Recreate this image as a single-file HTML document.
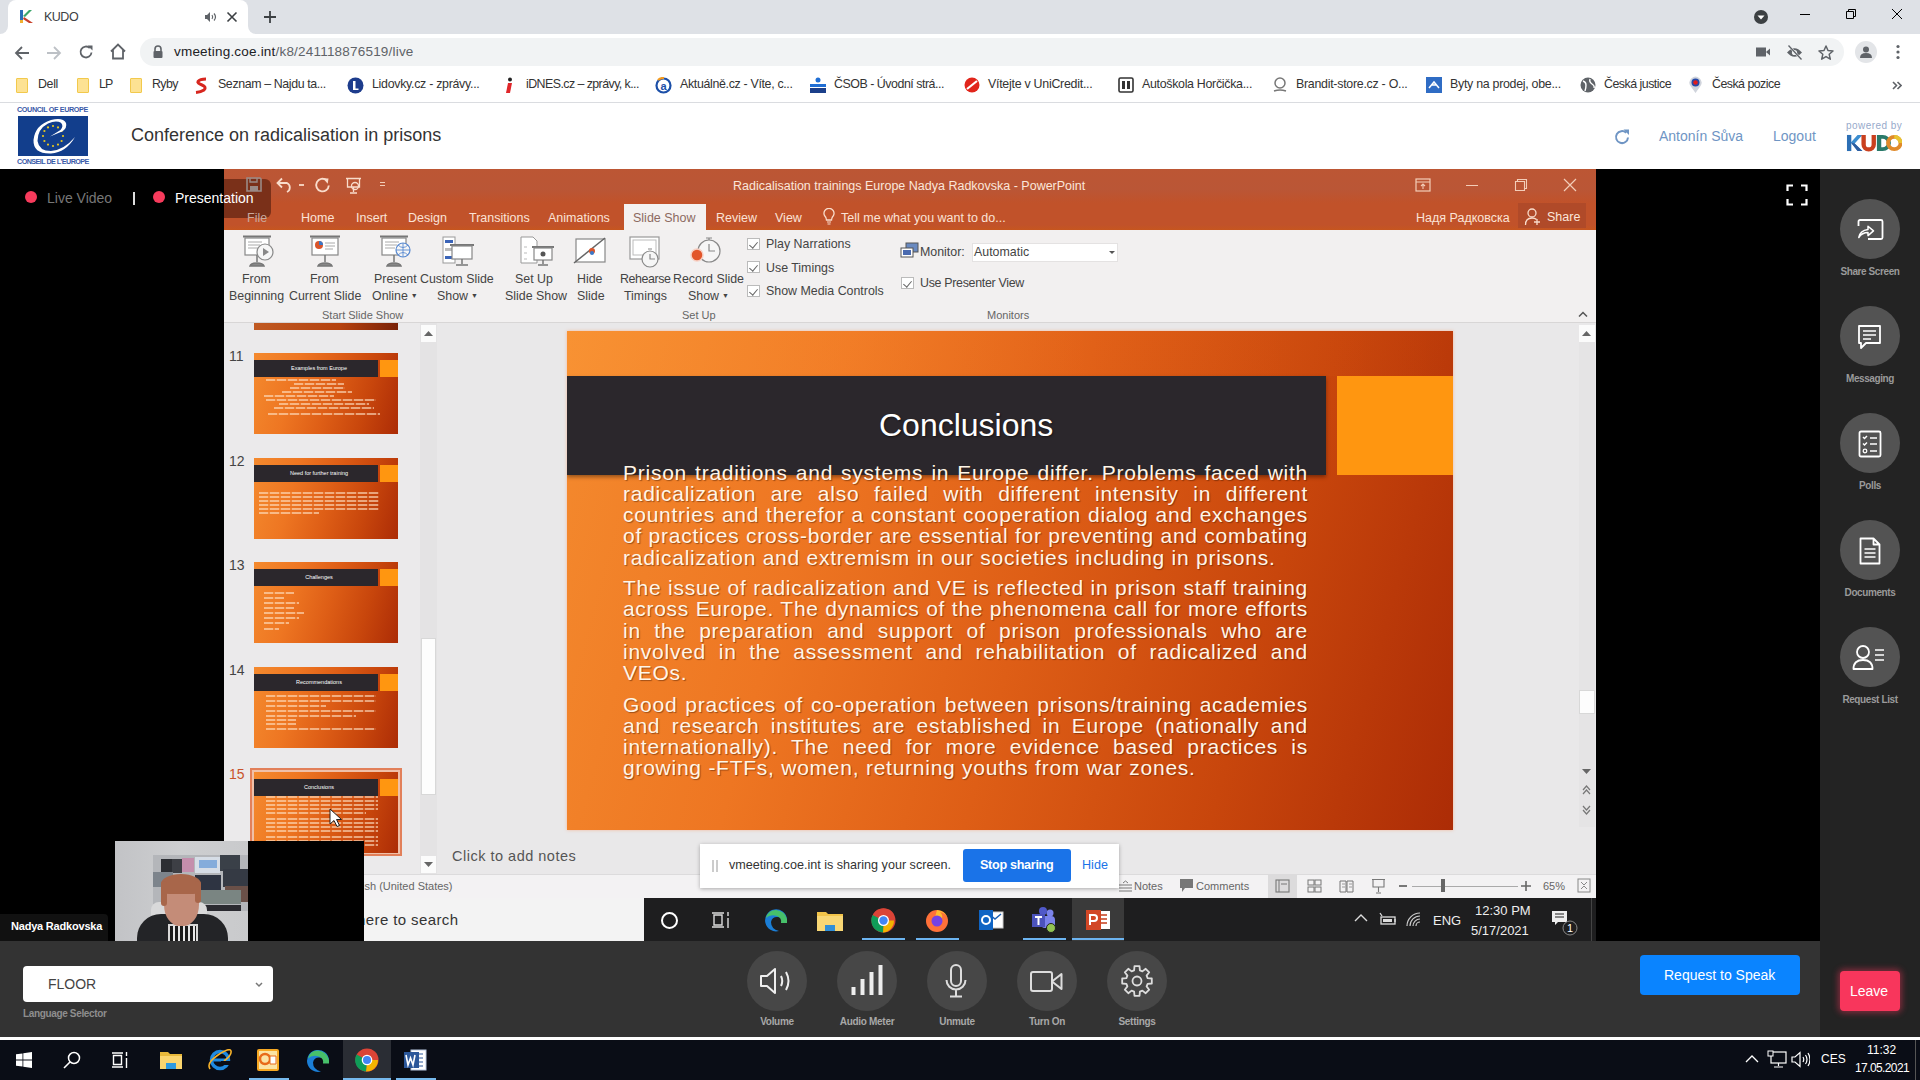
<!DOCTYPE html>
<html><head><meta charset="utf-8">
<style>
*{margin:0;padding:0;box-sizing:border-box}
html,body{width:1920px;height:1080px;overflow:hidden;background:#000;font-family:"Liberation Sans",sans-serif}
body{position:relative}
.a{position:absolute}
#bmk span{position:absolute;top:9px;white-space:nowrap;letter-spacing:-0.25px}
.fold{position:absolute;top:10px;width:12px;height:15px;background:#fde293;border:1px solid #f2c94c;border-radius:1px}
#ptabs span{position:absolute;top:211px;white-space:nowrap}
#rlab span{position:absolute;white-space:nowrap}
.cb{position:absolute;width:13px;height:12px;background:#fff;border:1px solid #bbb}
.cb::after{content:"";position:absolute;left:3px;top:1px;width:4px;height:7px;border-right:1.5px solid #666;border-bottom:1.5px solid #666;transform:rotate(40deg)}
.thumb{position:absolute;left:254px;width:144px;height:81px;overflow:hidden;background:linear-gradient(105deg,#f48a2e 0%,#ee7622 28%,#de5e16 52%,#c8460c 76%,#ac2c06 100%)}
.thumb .tb{position:absolute;left:0;top:7px;width:124px;height:17px;background:#2b272c}
.thumb .tsq{position:absolute;left:126px;top:7px;width:18px;height:17px;background:#ff9610}
.thumb .ttl{position:absolute;left:3px;top:11px;width:124px;text-align:center;height:8px;font-size:5.5px;line-height:8px;color:#fff;white-space:nowrap}
.thumb .tl{position:absolute;height:1.5px;background:repeating-linear-gradient(90deg,rgba(255,228,200,0.6) 0 9px,rgba(255,228,200,0.15) 9px 11px)}
.sbc{position:absolute;left:1840px;width:60px;height:60px;border-radius:50%;background:#535353}
.sbl{position:absolute;margin-top:2px;left:1820px;width:100px;text-align:center;font-size:10px;font-weight:bold;color:#9a9a9a;letter-spacing:-0.4px;white-space:nowrap}
.bbc{position:absolute;top:951px;margin-left:1px;width:60px;height:60px;border-radius:50%;background:#474747}
.bbl{position:absolute;top:1016px;margin-left:1px;width:120px;text-align:center;font-size:10px;font-weight:bold;color:#a8a8a8;letter-spacing:-0.3px;white-space:nowrap}
#body .bl{position:absolute;left:56px;width:685px;height:21.3px;font-size:21px;line-height:21.3px;color:#fff6e8;letter-spacing:0.75px;white-space:nowrap;text-align:justify;text-align-last:justify;text-shadow:1px 1px 1px rgba(60,20,0,0.45)}
#body .bl.last{text-align:left;text-align-last:left}
</style></head><body>
<!-- MAIN BLACK -->
<div class="a" style="left:0;top:169px;width:1820px;height:772px;background:#000"></div>
<div class="a" style="left:1820px;top:169px;width:100px;height:868px;background:#232323"></div>
<div class="a" style="left:0;top:941px;width:1820px;height:96px;background:#333"></div>
<div class="a" style="left:0;top:1037px;width:1920px;height:3px;background:#fff"></div>
<div class="a" style="left:0;top:1040px;width:1920px;height:40px;background:#0a0d16"></div>
<!-- CHROME TAB STRIP -->
<div class="a" style="left:0;top:0;width:1920px;height:34px;background:#dee1e6"></div>
<div class="a" style="left:8px;top:0;width:240px;height:34px;background:#fff;border-radius:8px 8px 0 0"></div>
<div class="a" style="left:0;top:26px;width:256px;height:8px;background:#fff"></div><div class="a" style="left:0;top:18px;width:8px;height:16px;background:#dee1e6;border-radius:0 0 8px 0"></div><div class="a" style="left:248px;top:18px;width:8px;height:16px;background:#dee1e6;border-radius:0 0 0 8px"></div>
<svg class="a" style="left:19px;top:9px" width="16" height="16" viewBox="0 0 16 16">
 <path d="M1 1h3v13H1z" fill="#2a6fb8"/><path d="M4 7l6-6h3L6 8z" fill="#3aa66b"/><path d="M5 8l9 6h-4L4 10z" fill="#c8402a"/><path d="M1 11h3v3H1z" fill="#f0b030"/>
</svg>
<div class="a" style="left:44px;top:10px;font-size:12.5px;color:#3c4043;letter-spacing:-0.5px">KUDO</div>
<svg class="a" style="left:204px;top:11px" width="14" height="12" viewBox="0 0 14 12"><path d="M1 4h2l3-3v10L3 8H1z" fill="#5f6368"/><path d="M8 4q1.5 2 0 4M10 2.5q3 3.5 0 7" stroke="#5f6368" stroke-width="1.2" fill="none"/></svg>
<svg class="a" style="left:226px;top:11px" width="12" height="12" viewBox="0 0 12 12"><path d="M1.5 1.5l9 9M10.5 1.5l-9 9" stroke="#3c4043" stroke-width="1.6"/></svg>
<svg class="a" style="left:263px;top:10px" width="14" height="14" viewBox="0 0 14 14"><path d="M7 1v12M1 7h12" stroke="#3c4043" stroke-width="1.8"/></svg>
<svg class="a" style="left:1753px;top:9px" width="16" height="16" viewBox="0 0 16 16"><circle cx="8" cy="8" r="7" fill="#3c4043"/><path d="M4.5 6.5h7L8 10.5z" fill="#fff"/></svg>
<div class="a" style="left:1800px;top:14px;width:10px;height:1px;background:#000"></div>
<svg class="a" style="left:1845px;top:8px" width="12" height="12" viewBox="0 0 12 12"><path d="M1.5 3.5h7v7h-7z M3.5 3.5v-2h7v7h-2" stroke="#000" stroke-width="1" fill="none"/></svg>
<svg class="a" style="left:1891px;top:8px" width="12" height="12" viewBox="0 0 12 12"><path d="M1 1l10 10M11 1L1 11" stroke="#000" stroke-width="1"/></svg>
<!-- ADDRESS ROW -->
<div class="a" style="left:0;top:34px;width:1920px;height:34px;background:#fff"></div>
<svg class="a" style="left:14px;top:45px" width="16" height="16" viewBox="0 0 16 16"><path d="M15 8H2M8 2L2 8l6 6" stroke="#5f6368" stroke-width="1.8" fill="none"/></svg>
<svg class="a" style="left:46px;top:45px" width="16" height="16" viewBox="0 0 16 16"><path d="M1 8h13M8 2l6 6-6 6" stroke="#bdc1c6" stroke-width="1.8" fill="none"/></svg>
<svg class="a" style="left:78px;top:44px" width="16" height="16" viewBox="0 0 16 16"><path d="M13.5 8.5A5.5 5.5 0 1 1 11.8 4" stroke="#5f6368" stroke-width="1.8" fill="none"/><path d="M9.5 1.5h5v5z" fill="#5f6368"/></svg>
<svg class="a" style="left:109px;top:43px" width="18" height="17" viewBox="0 0 18 17"><path d="M2 8.5L9 1.5l7 7M4 7v8.5h10V7" stroke="#5f6368" stroke-width="1.8" fill="none"/></svg>
<div class="a" style="left:140px;top:38px;width:1704px;height:28px;background:#f1f3f4;border-radius:14px"></div>
<svg class="a" style="left:152px;top:45px" width="12" height="13" viewBox="0 0 12 13"><path d="M3 6V4a3 3 0 0 1 6 0v2" stroke="#5f6368" stroke-width="1.6" fill="none"/><rect x="1.5" y="6" width="9" height="7" rx="1" fill="#5f6368"/></svg>
<div class="a" style="left:174px;top:44px;font-size:13.5px;letter-spacing:0.2px;color:#202124;white-space:nowrap">vmeeting.coe.int<span style="color:#5f6368">/k8/241118876519/live</span></div>
<svg class="a" style="left:1755px;top:46px" width="16" height="12" viewBox="0 0 16 12"><rect x="1" y="1.5" width="10" height="9" fill="#5f6368"/><path d="M11 6l4-3.5v7z" fill="#5f6368"/></svg>
<svg class="a" style="left:1786px;top:45px" width="17" height="15" viewBox="0 0 17 15"><path d="M1 7.5Q8.5 -1 16 7.5Q8.5 16 1 7.5z" fill="#5f6368"/><circle cx="8.5" cy="7.5" r="2.6" fill="#f1f3f4"/><path d="M2.5 0.5l13 14" stroke="#f1f3f4" stroke-width="2.2"/><path d="M2.5 0.5l13 14" stroke="#5f6368" stroke-width="1.3"/></svg>
<svg class="a" style="left:1818px;top:45px" width="16" height="15" viewBox="0 0 16 15"><path d="M8 1l2 4.5 5 .5-3.8 3.3 1.1 4.9L8 11.6l-4.3 2.6 1.1-4.9L1 6l5-.5z" stroke="#5f6368" stroke-width="1.5" fill="none" stroke-linejoin="round"/></svg>
<div class="a" style="left:1855px;top:41px;width:22px;height:22px;border-radius:50%;background:#e3e5e8"></div>
<svg class="a" style="left:1859px;top:45px" width="14" height="14" viewBox="0 0 14 14"><circle cx="7" cy="4.5" r="3" fill="#5f6368"/><path d="M1 13q0-5 6-5t6 5z" fill="#5f6368"/></svg>
<svg class="a" style="left:1895px;top:44px" width="6" height="16" viewBox="0 0 6 16"><circle cx="3" cy="2.5" r="1.6" fill="#5f6368"/><circle cx="3" cy="8" r="1.6" fill="#5f6368"/><circle cx="3" cy="13.5" r="1.6" fill="#5f6368"/></svg>
<!-- BOOKMARKS -->
<div class="a" style="left:0;top:68px;width:1920px;height:35px;background:#fff;border-bottom:1px solid #dadce0"></div>
<div id="bmk" class="a" style="left:0;top:68px;width:1920px;height:34px;font-size:12.4px;color:#333">
 <div class="fold" style="left:16px"></div><span style="left:38px;letter-spacing:-0.34px">Dell</span>
 <div class="fold" style="left:77px"></div><span style="left:99px;letter-spacing:-0.8px">LP</span>
 <div class="fold" style="left:130px"></div><span style="left:152px;letter-spacing:-0.6px">Ryby</span>
 <svg class="a" style="left:194px;top:9px" width="16" height="17" viewBox="0 0 16 17"><path d="M12 2Q6 2 4 4.5Q3 6 8 8Q13 10 10 13Q7 15 2 15.5" stroke="#d7261e" stroke-width="3" fill="none"/></svg>
 <span style="left:218px;letter-spacing:-0.39px">Seznam – Najdu ta...</span>
 <svg class="a" style="left:347px;top:9px" width="17" height="17" viewBox="0 0 17 17"><circle cx="8.5" cy="8.5" r="8" fill="#1d3c8c"/><path d="M6 4h2.5v7.5h3v1.5H6z" fill="#fff"/></svg>
 <span style="left:372px;letter-spacing:-0.29px">Lidovky.cz - zprávy...</span>
 <svg class="a" style="left:504px;top:9px" width="10" height="17" viewBox="0 0 10 17"><circle cx="6" cy="2.5" r="2" fill="#222"/><path d="M4 6h4l-2 10H2z" fill="#e0262a"/></svg>
 <span style="left:526px;letter-spacing:-0.56px">iDNES.cz – zprávy, k...</span>
 <svg class="a" style="left:655px;top:9px" width="17" height="17" viewBox="0 0 17 17"><circle cx="8.5" cy="8.5" r="7" fill="none" stroke="#1b4fa8" stroke-width="2.2"/><path d="M3 3a8 8 0 0 1 6-2" stroke="#f39a1e" stroke-width="2.2" fill="none"/><text x="8.5" y="12.5" font-size="11" font-weight="bold" text-anchor="middle" fill="#1b4fa8" font-family="Liberation Sans">a</text></svg>
 <span style="left:680px;letter-spacing:-0.33px">Aktuálně.cz - Víte, c...</span>
 <svg class="a" style="left:809px;top:9px" width="18" height="17" viewBox="0 0 18 17"><circle cx="9" cy="3" r="2.5" fill="#1f6ed4"/><path d="M1 7h16v3H1z" fill="#1f6ed4"/><path d="M1 11h16v5H1z" fill="#1b3f8a"/></svg>
 <span style="left:834px;letter-spacing:-0.47px">ČSOB - Úvodní strá...</span>
 <svg class="a" style="left:964px;top:9px" width="16" height="16" viewBox="0 0 16 16"><circle cx="8" cy="8" r="7.5" fill="#e1251b"/><path d="M3 12L13 4" stroke="#fff" stroke-width="2.2"/></svg>
 <span style="left:988px;letter-spacing:-0.26px">Vítejte v UniCredit...</span>
 <svg class="a" style="left:1118px;top:9px" width="16" height="16" viewBox="0 0 16 16"><rect x="1" y="1" width="14" height="14" rx="1.5" fill="none" stroke="#333" stroke-width="1.6"/><path d="M4 4h3v8H4zM9 4h3v8H9z" fill="#333"/></svg>
 <span style="left:1142px;letter-spacing:-0.3px">Autoškola Horčička...</span>
 <svg class="a" style="left:1272px;top:9px" width="16" height="17" viewBox="0 0 16 17"><circle cx="8" cy="6" r="5" fill="none" stroke="#777" stroke-width="1.5"/><path d="M2 14q6-2 12 0" stroke="#777" stroke-width="1.5" fill="none"/></svg>
 <span style="left:1296px;letter-spacing:-0.27px">Brandit-store.cz - O...</span>
 <svg class="a" style="left:1426px;top:9px" width="16" height="16" viewBox="0 0 16 16"><rect width="16" height="16" fill="#2f6cc4"/><path d="M3 11l5-6 5 6M6 8h4" stroke="#fff" stroke-width="1.5" fill="none"/></svg>
 <span style="left:1450px;letter-spacing:-0.28px">Byty na prodej, obe...</span>
 <svg class="a" style="left:1580px;top:9px" width="16" height="16" viewBox="0 0 16 16"><circle cx="8" cy="8" r="7.5" fill="#5f6368"/><path d="M3 4q3 1 3 4t-1 6M10 2q-1 3 2 5t2 4" stroke="#fff" stroke-width="1.4" fill="none"/></svg>
 <span style="left:1604px;letter-spacing:-0.51px">Česká justice</span>
 <svg class="a" style="left:1688px;top:8px" width="15" height="18" viewBox="0 0 15 18"><path d="M7.5 17L2.5 10A6 6 0 1 1 12.5 10z" fill="#d0d4dc"/><circle cx="7.5" cy="6.5" r="4" fill="#2549a8"/><circle cx="7.5" cy="6.5" r="2.3" fill="#e21b1b"/></svg>
 <span style="left:1712px;letter-spacing:-0.53px">Česká pozice</span>
 <svg class="a" style="left:1892px;top:13px" width="10" height="9" viewBox="0 0 10 9"><path d="M1 1l3.5 3.5L1 8M5.5 1L9 4.5 5.5 8" stroke="#5f6368" stroke-width="1.6" fill="none"/></svg>
</div>
<!-- KUDO HEADER -->
<div class="a" style="left:0;top:103px;width:1920px;height:66px;background:#fff"></div>
<div class="a" style="left:17px;top:106px;width:72px;font-size:7.2px;font-weight:bold;line-height:8px;color:#3a5aa8;letter-spacing:-0.35px;white-space:nowrap">COUNCIL OF EUROPE</div>
<div class="a" style="left:18px;top:116px;width:70px;height:40px;background:#123e8c"></div>
<svg class="a" style="left:18px;top:116px" width="70" height="40" viewBox="0 0 70 40">
 <g fill="#e8c81e"><circle cx="35" cy="10" r="1.1"/><circle cx="40" cy="11.4" r="1.1"/><circle cx="43.6" cy="15" r="1.1"/><circle cx="45" cy="20" r="1.1"/><circle cx="43.6" cy="25" r="1.1"/><circle cx="40" cy="28.6" r="1.1"/><circle cx="35" cy="30" r="1.1"/><circle cx="30" cy="28.6" r="1.1"/><circle cx="26.4" cy="25" r="1.1"/><circle cx="25" cy="20" r="1.1"/><circle cx="26.4" cy="15" r="1.1"/><circle cx="30" cy="11.4" r="1.1"/></g>
 <path d="M57 21Q48 36.5 33 37.5Q15 38 15.5 24Q17 9 33 4Q45 1 48 7Q49.5 12 44 15.5L32 20.5L42.5 14Q46 10 43 6.8Q38 4 30 7.5Q19.5 13 19.5 25Q21 35 33 35Q46 34 57 21z" fill="#fff"/>
</svg>
<div class="a" style="left:17px;top:158px;width:72px;font-size:7.2px;font-weight:bold;line-height:8px;color:#3a5aa8;letter-spacing:-0.55px;white-space:nowrap">CONSEIL DE L'EUROPE</div>
<div class="a" style="left:131px;top:125px;font-size:18px;color:#333;white-space:nowrap">Conference on radicalisation in prisons</div>
<svg class="a" style="left:1613px;top:128px" width="18" height="18" viewBox="0 0 18 18"><path d="M15 9.5A6 6 0 1 1 13.2 4.8" stroke="#6f95c4" stroke-width="2" fill="none"/><path d="M10.5 1.5h5.5v5.5z" fill="#6f95c4"/></svg>
<div class="a" style="left:1659px;top:128px;font-size:14px;color:#6f95c4;white-space:nowrap">Antonín Sůva</div>
<div class="a" style="left:1773px;top:128px;font-size:14px;color:#6f95c4;white-space:nowrap">Logout</div>
<div class="a" style="left:1846px;top:120px;font-size:10px;color:#97aacb;white-space:nowrap;letter-spacing:0.45px">powered by</div>
<svg class="a" style="left:1846px;top:134px" width="56" height="18" viewBox="0 0 58 19" preserveAspectRatio="none">
 <path d="M1 1h4.5v17H1z" fill="#2c6fb5"/><path d="M5 9l7-8h5L9 10l8 8h-5z" fill="#3c8ed0"/><path d="M5 9l4 1 8 8h-5z" fill="#2d5da0"/>
 <path d="M16 1h4.5v10a3 3 0 0 0 6 0V1H31v10a7.5 7.5 0 0 1-15 0z" fill="#c9401f"/>
 <path d="M32 1h6a8.5 8.5 0 0 1 0 17h-6z M36.5 5v9h1.5a4.5 4.5 0 0 0 0-9z" fill="#2a7a6a" fill-rule="evenodd"/>
 <circle cx="50" cy="9.5" r="6.5" fill="none" stroke="#e08a2a" stroke-width="4"/><path d="M50 3a6.5 6.5 0 0 1 6.5 6.5" stroke="#e8c430" stroke-width="4" fill="none"/>
</svg>
<!-- POWERPOINT WINDOW -->
<div class="a" style="left:224px;top:169px;width:1372px;height:61px;background:linear-gradient(180deg,#bc5634 0px,#ba5636 20px,#c1522a 34px,#c1522a 56px,#c6561f 61px)"></div>
<div class="a" style="left:224px;top:179px;width:47px;height:39px;background:#7a3019;border-radius:0 6px 6px 0"></div>
<svg class="a" style="left:246px;top:177px" width="16" height="15" viewBox="0 0 16 15"><path d="M1 1h13l1 1v12H1z" fill="none" stroke="#9a8a86" stroke-width="1.6"/><path d="M4 1v4h7V1" fill="none" stroke="#9a8a86" stroke-width="1.4"/><rect x="4" y="9" width="8" height="5" fill="#9a8a86"/></svg>
<svg class="a" style="left:276px;top:177px" width="18" height="16" viewBox="0 0 18 16"><path d="M2 6h9a5 5 0 0 1 0 9" fill="none" stroke="#f9dccb" stroke-width="1.8"/><path d="M6 1.5L1.5 6 6 10.5" fill="none" stroke="#f9dccb" stroke-width="1.8"/></svg>
<div class="a" style="left:299px;top:184px;width:5px;height:2px;background:#f3cdb8"></div>
<svg class="a" style="left:314px;top:177px" width="17" height="17" viewBox="0 0 17 17"><path d="M12.5 3.2A6.3 6.3 0 1 0 14.8 8.5" fill="none" stroke="#f9dccb" stroke-width="1.9"/><path d="M9 1.2l5.5 0.3-0.8 5.2z" fill="#f9dccb"/></svg>
<svg class="a" style="left:345px;top:177px" width="17" height="17" viewBox="0 0 17 17"><path d="M1 1.5h15" stroke="#f9dccb" stroke-width="1.5"/><path d="M2.5 2v8h12V2" fill="none" stroke="#f9dccb" stroke-width="1.3"/><circle cx="10" cy="9" r="3.5" fill="none" stroke="#f9dccb" stroke-width="1.3"/><path d="M8.5 10v5M5 16h7" stroke="#f9dccb" stroke-width="1.3"/></svg>
<div class="a" style="left:380px;top:182px;width:5px;height:1px;background:#f3cdb8;box-shadow:0 3px 0 #f3cdb8"></div>
<div class="a" style="left:733px;top:179px;font-size:12.5px;color:#fbe6da;white-space:nowrap">Radicalisation trainings Europe Nadya Radkovska - PowerPoint</div>
<svg class="a" style="left:1415px;top:178px" width="16" height="14" viewBox="0 0 16 14"><rect x="1" y="1" width="14" height="12" fill="none" stroke="#f3cdb8" stroke-width="1.2"/><path d="M1 4h14M8 6v5M6 8l2-2 2 2" fill="none" stroke="#f3cdb8" stroke-width="1.1"/></svg>
<div class="a" style="left:1466px;top:185px;width:12px;height:1px;background:#f3cdb8"></div>
<svg class="a" style="left:1514px;top:178px" width="14" height="14" viewBox="0 0 14 14"><path d="M1.5 3.5h9v9h-9zM3.5 3.5v-2h9v9h-2" fill="none" stroke="#f3cdb8" stroke-width="1.1"/></svg>
<svg class="a" style="left:1563px;top:178px" width="14" height="14" viewBox="0 0 14 14"><path d="M1 1l12 12M13 1L1 13" stroke="#f3cdb8" stroke-width="1.2"/></svg>
<!-- tabs -->
<div id="ptabs" class="a" style="left:0;top:0;width:1920px;height:1px;font-size:12.5px;color:#fbe3d6">
 <span style="left:247px;color:#c9a99e">File</span>
 <span style="left:301px">Home</span>
 <span style="left:356px">Insert</span>
 <span style="left:408px">Design</span>
 <span style="left:469px">Transitions</span>
 <span style="left:548px">Animations</span>
 <span style="left:716px">Review</span>
 <span style="left:775px">View</span>
 <span style="left:841px">Tell me what you want to do...</span>
 <span style="left:1416px">Надя Радковска</span>
</div>
<div class="a" style="left:624px;top:204px;width:82px;height:27px;background:#f4f1f0"></div>
<div class="a" style="left:633px;top:211px;font-size:12.5px;color:#8c6a60;white-space:nowrap">Slide Show</div>
<svg class="a" style="left:822px;top:208px" width="14" height="17" viewBox="0 0 14 17"><path d="M4.5 12q0-2.5-2-4.5A5 5 0 1 1 11.5 7.5q-2 2-2 4.5z" fill="none" stroke="#f9dccb" stroke-width="1.3"/><path d="M5 14h4M5.5 16h3" stroke="#f9dccb" stroke-width="1.2"/></svg>
<div class="a" style="left:1518px;top:203px;width:68px;height:25px;background:#b04a29"></div>
<svg class="a" style="left:1524px;top:207px" width="19" height="19" viewBox="0 0 19 19"><circle cx="8" cy="6" r="4" fill="none" stroke="#f9dccb" stroke-width="1.3"/><path d="M1.5 18q0-7 6.5-7q3 0 4.5 1.5" fill="none" stroke="#f9dccb" stroke-width="1.3"/><path d="M13 12v6M10 15h6" stroke="#f9dccb" stroke-width="1.3"/></svg>
<div class="a" style="left:1547px;top:210px;font-size:12.5px;color:#fbe6da;white-space:nowrap">Share</div>
<!-- RIBBON -->
<div class="a" style="left:224px;top:230px;width:1372px;height:93px;background:#f2f0f0;border-bottom:1px solid #d8d6d6"></div>
<div id="rlab" class="a" style="left:0;top:0;width:1920px;height:1px;font-size:12.4px;color:#444">
 <span style="left:242px;top:272px">From</span><span style="left:229px;top:289px">Beginning</span>
 <span style="left:310px;top:272px">From</span><span style="left:289px;top:289px">Current Slide</span>
 <span style="left:374px;top:272px">Present</span><span style="left:372px;top:289px">Online<i style="font-style:normal;font-size:7px;vertical-align:2px;margin-left:3px">▼</i></span>
 <span style="left:420px;top:272px">Custom Slide</span><span style="left:437px;top:289px">Show<i style="font-style:normal;font-size:7px;vertical-align:2px;margin-left:3px">▼</i></span>
 <span style="left:515px;top:272px">Set Up</span><span style="left:505px;top:289px">Slide Show</span>
 <span style="left:577px;top:272px">Hide</span><span style="left:577px;top:289px">Slide</span>
 <span style="left:620px;top:272px;letter-spacing:-0.4px">Rehearse</span><span style="left:624px;top:289px">Timings</span>
 <span style="left:673px;top:272px">Record Slide</span><span style="left:688px;top:289px">Show<i style="font-style:normal;font-size:7px;vertical-align:2px;margin-left:3px">▼</i></span>
 <span style="left:766px;top:237px">Play Narrations</span>
 <span style="left:766px;top:261px">Use Timings</span>
 <span style="left:766px;top:284px">Show Media Controls</span>
 <span style="left:920px;top:245px">Monitor:</span>
 <span style="left:920px;top:276px;letter-spacing:-0.3px">Use Presenter View</span>
 <span style="left:322px;top:309px;font-size:11px;color:#666">Start Slide Show</span>
 <span style="left:682px;top:309px;font-size:11px;color:#666">Set Up</span>
 <span style="left:987px;top:309px;font-size:11px;color:#666">Monitors</span>
</div>
<div class="a" style="left:972px;top:243px;width:146px;height:19px;background:#fff;border:1px solid #e4e2e2"></div>
<div class="a" style="left:974px;top:245px;font-size:12.4px;color:#444;white-space:nowrap">Automatic</div>
<svg class="a" style="left:1109px;top:251px" width="6" height="3" viewBox="0 0 6 3"><path d="M0 0h6L3 3z" fill="#555"/></svg>
<div class="cb" style="left:747px;top:238px"></div>
<div class="cb" style="left:747px;top:261px"></div>
<div class="cb" style="left:747px;top:285px"></div>
<div class="cb" style="left:901px;top:277px"></div>
<svg class="a" style="left:1578px;top:311px" width="10" height="6" viewBox="0 0 10 6"><path d="M1 5.5L5 1.5 9 5.5" fill="none" stroke="#555" stroke-width="1.5"/></svg>
<!-- ribbon icons -->
<svg class="a" style="left:240px;top:235px" width="36" height="33" viewBox="0 0 36 33"><path d="M3 1.5h28" stroke="#777" stroke-width="2"/><rect x="5" y="3" width="24" height="17" fill="#fff" stroke="#888" stroke-width="1.2"/><path d="M8 7h14M8 10h12M8 13h10" stroke="#aaa" stroke-width="1"/><path d="M17 20v7M10 31q1-3 7-3t7 3z" fill="#888" stroke="#777" stroke-width="1.5"/><circle cx="25" cy="17" r="8" fill="#f6f6f6" stroke="#888" stroke-width="1.2"/><path d="M23 13v8l6-4z" fill="#888"/></svg>
<svg class="a" style="left:308px;top:235px" width="34" height="33" viewBox="0 0 34 33"><path d="M2 1.5h30" stroke="#777" stroke-width="2"/><rect x="4" y="3" width="26" height="17" fill="#fff" stroke="#888" stroke-width="1.2"/><circle cx="11" cy="10" r="4" fill="#d9552b"/><path d="M11 6v4h4a4 4 0 0 0-4-4z" fill="#3a78c8"/><path d="M17 8h10M17 11h10M17 14h8" stroke="#aaa" stroke-width="1"/><path d="M17 20v7M10 31q1-3 7-3t7 3z" fill="#888" stroke="#777" stroke-width="1.5"/></svg>
<svg class="a" style="left:377px;top:235px" width="36" height="33" viewBox="0 0 36 33"><path d="M3 1.5h28" stroke="#777" stroke-width="2"/><rect x="5" y="3" width="24" height="17" fill="#fff" stroke="#888" stroke-width="1.2"/><path d="M8 7h14M8 10h12M8 13h10" stroke="#aaa" stroke-width="1"/><path d="M17 20v7M10 31q1-3 7-3t7 3z" fill="#888" stroke="#777" stroke-width="1.5"/><circle cx="26" cy="15" r="7" fill="#f6f6f6" stroke="#5a8ad0" stroke-width="1.2"/><path d="M19 15h14M26 8v14M21 10q5 5 10 0M21 20q5-5 10 0" fill="none" stroke="#5a8ad0" stroke-width="0.9"/></svg>
<svg class="a" style="left:441px;top:235px" width="34" height="33" viewBox="0 0 34 33"><rect x="2" y="2" width="12" height="26" fill="#fff" stroke="#999" stroke-width="1"/><rect x="4" y="5" width="8" height="3" fill="#3b64b8"/><rect x="4" y="13" width="8" height="3" fill="#bbb"/><rect x="4" y="21" width="8" height="3" fill="#3b64b8"/><path d="M9 10h24" stroke="#777" stroke-width="2"/><rect x="11" y="11" width="20" height="13" fill="#fff" stroke="#888" stroke-width="1.2"/><path d="M21 24v5M15 30h12" stroke="#777" stroke-width="1.5"/></svg>
<svg class="a" style="left:519px;top:235px" width="36" height="33" viewBox="0 0 36 33"><path d="M2 2h12l4 4v22H2z" fill="#fff" stroke="#999" stroke-width="1"/><path d="M5 12h3M5 18h3M5 24h3" stroke="#bbb"/><path d="M13 12h22" stroke="#777" stroke-width="2"/><rect x="15" y="13" width="18" height="12" fill="#fff" stroke="#888" stroke-width="1.2"/><circle cx="24" cy="19" r="2.5" fill="#555"/><path d="M24 25v4M19 30h10" stroke="#777" stroke-width="1.5"/></svg>
<svg class="a" style="left:573px;top:236px" width="34" height="29" viewBox="0 0 34 29"><rect x="3" y="3" width="29" height="23" fill="#fff" stroke="#888" stroke-width="1.2"/><path d="M1 27L32 2" stroke="#666" stroke-width="1.5"/><circle cx="19" cy="15" r="3" fill="#d9552b"/><circle cx="19" cy="17" r="2" fill="#3a78c8"/></svg>
<svg class="a" style="left:628px;top:235px" width="36" height="34" viewBox="0 0 36 34"><rect x="2" y="2" width="29" height="22" fill="#fff" stroke="#999" stroke-width="1.2"/><rect x="5" y="5" width="23" height="15" fill="none" stroke="#bbb" stroke-width="1"/><circle cx="22" cy="24" r="8" fill="#f6f6f6" stroke="#888" stroke-width="1.2"/><path d="M22 19v5h5M20 14h4" stroke="#888" stroke-width="1.2" fill="none"/></svg>
<svg class="a" style="left:689px;top:235px" width="34" height="34" viewBox="0 0 34 34"><circle cx="20" cy="16" r="11" fill="#f6f6f6" stroke="#888" stroke-width="1.2"/><path d="M20 9v7h6M17 3h6M20 3v2" stroke="#888" stroke-width="1.2" fill="none"/><circle cx="8" cy="20" r="6" fill="#e2552a" stroke="#f6d0c4" stroke-width="1.5"/></svg>
<svg class="a" style="left:900px;top:242px" width="19" height="17" viewBox="0 0 19 17"><rect x="6" y="1" width="12" height="9" fill="#6a8ac0" stroke="#555" stroke-width="1"/><rect x="1" y="6" width="12" height="9" fill="#fff" stroke="#555" stroke-width="1"/><rect x="3" y="8" width="8" height="5" fill="#4a6ab0"/></svg>
<!-- PANES -->
<div class="a" style="left:224px;top:323px;width:1372px;height:552px;background:#e9e8e9"></div>
<div class="a" style="left:224px;top:323px;width:196px;height:552px;background:#ebeaeb"></div>
<div class="a" style="left:420px;top:323px;width:17px;height:552px;background:#e4e3e4"></div>
<div class="a" style="left:421px;top:325px;width:15px;height:17px;background:#fbfbfb"></div>
<svg class="a" style="left:424px;top:331px" width="9" height="5" viewBox="0 0 9 5"><path d="M0 5L4.5 0 9 5z" fill="#666"/></svg>
<div class="a" style="left:421px;top:638px;width:15px;height:157px;background:#fdfdfd;border:1px solid #d8d8d8"></div>
<div class="a" style="left:421px;top:856px;width:15px;height:17px;background:#fbfbfb"></div>
<svg class="a" style="left:424px;top:862px" width="9" height="5" viewBox="0 0 9 5"><path d="M0 0L4.5 5 9 0z" fill="#666"/></svg>
<div class="a" style="left:1579px;top:325px;width:16px;height:17px;background:#fbfbfb"></div>
<svg class="a" style="left:1582px;top:331px" width="9" height="5" viewBox="0 0 9 5"><path d="M0 5L4.5 0 9 5z" fill="#666"/></svg>
<div class="a" style="left:1579px;top:342px;width:16px;height:485px;background:#e5e4e5"></div>
<div class="a" style="left:1579px;top:690px;width:16px;height:24px;background:#fdfdfd;border:1px solid #d8d8d8"></div>
<svg class="a" style="left:1582px;top:769px" width="9" height="5" viewBox="0 0 9 5"><path d="M0 0L4.5 5 9 0z" fill="#666"/></svg>
<svg class="a" style="left:1582px;top:785px" width="9" height="30" viewBox="0 0 9 30"><path d="M1 5L4.5 1 8 5M1 9L4.5 5 8 9" fill="none" stroke="#777" stroke-width="1.2"/><path d="M1 21L4.5 25 8 21M1 25L4.5 29 8 25" fill="none" stroke="#777" stroke-width="1.2"/></svg>
<!-- slide numbers -->
<div class="a" style="left:229px;top:348px;font-size:14px;color:#444">11</div>
<div class="a" style="left:229px;top:453px;font-size:14px;color:#444">12</div>
<div class="a" style="left:229px;top:557px;font-size:14px;color:#444">13</div>
<div class="a" style="left:229px;top:662px;font-size:14px;color:#444">14</div>
<div class="a" style="left:229px;top:766px;font-size:14px;color:#c9532a">15</div>
<!-- thumb 10 partial -->
<div class="a" style="left:254px;top:323px;width:144px;height:7px;background:linear-gradient(90deg,#c05a22,#b5420f 60%,#7a2208)"></div>
<!-- thumbnails -->
<div class="thumb" style="top:353px"><div class="tb"></div><div class="tsq"></div><div class="ttl">Examples from Europe</div>
 <div class="tl" style="left:12px;top:26px;width:70px"></div><div class="tl" style="left:40px;top:30px;width:50px"></div><div class="tl" style="left:36px;top:34px;width:55px"></div><div class="tl" style="left:28px;top:38px;width:70px"></div><div class="tl" style="left:10px;top:42px;width:70px"></div><div class="tl" style="left:12px;top:46px;width:110px"></div><div class="tl" style="left:25px;top:50px;width:90px"></div><div class="tl" style="left:20px;top:54px;width:100px"></div><div class="tl" style="left:14px;top:60px;width:112px"></div></div>
<div class="thumb" style="top:458px"><div class="tb"></div><div class="tsq"></div><div class="ttl">Need for further training</div>
 <div class="tl" style="left:5px;top:34px;width:120px;height:2px"></div><div class="tl" style="left:5px;top:38px;width:120px;height:2px"></div><div class="tl" style="left:5px;top:42px;width:120px;height:2px"></div><div class="tl" style="left:5px;top:46px;width:120px;height:2px"></div><div class="tl" style="left:5px;top:50px;width:120px;height:2px"></div><div class="tl" style="left:5px;top:54px;width:60px;height:2px"></div></div>
<div class="thumb" style="top:562px"><div class="tb"></div><div class="tsq"></div><div class="ttl">Challenges</div>
 <div class="tl" style="left:10px;top:30px;width:30px"></div><div class="tl" style="left:10px;top:35px;width:20px"></div><div class="tl" style="left:10px;top:40px;width:35px"></div><div class="tl" style="left:10px;top:45px;width:30px"></div><div class="tl" style="left:10px;top:50px;width:40px"></div><div class="tl" style="left:10px;top:55px;width:35px"></div><div class="tl" style="left:10px;top:60px;width:25px"></div><div class="tl" style="left:10px;top:66px;width:15px"></div></div>
<div class="thumb" style="top:667px"><div class="tb"></div><div class="tsq"></div><div class="ttl">Recommendations</div>
 <div class="tl" style="left:12px;top:28px;width:110px"></div><div class="tl" style="left:12px;top:33px;width:110px"></div><div class="tl" style="left:12px;top:38px;width:60px"></div><div class="tl" style="left:12px;top:43px;width:110px"></div><div class="tl" style="left:12px;top:48px;width:90px"></div><div class="tl" style="left:12px;top:52px;width:30px"></div><div class="tl" style="left:12px;top:56px;width:30px"></div><div class="tl" style="left:12px;top:61px;width:110px"></div></div>
<div class="a" style="left:250px;top:768px;width:152px;height:88px;border:2px solid #e2805a;background:#f0c0a8"></div>
<div class="thumb" style="top:772px;left:254px"><div class="tb"></div><div class="tsq"></div><div class="ttl">Conclusions</div>
 <div class="tl" style="left:12px;top:24px;width:112px;height:2px"></div><div class="tl" style="left:12px;top:28px;width:112px;height:2px"></div><div class="tl" style="left:12px;top:32px;width:112px;height:2px"></div><div class="tl" style="left:12px;top:36px;width:112px;height:2px"></div><div class="tl" style="left:12px;top:40px;width:100px;height:2px"></div>
 <div class="tl" style="left:12px;top:46px;width:112px;height:2px"></div><div class="tl" style="left:12px;top:50px;width:112px;height:2px"></div><div class="tl" style="left:12px;top:54px;width:112px;height:2px"></div><div class="tl" style="left:12px;top:58px;width:112px;height:2px"></div>
 <div class="tl" style="left:12px;top:64px;width:112px;height:2px"></div><div class="tl" style="left:12px;top:68px;width:112px;height:2px"></div><div class="tl" style="left:12px;top:72px;width:112px;height:2px"></div></div>
<svg class="a" style="left:329px;top:808px" width="14" height="20" viewBox="0 0 14 20"><path d="M1 1v15l4-3.5 3 6 2.5-1-3-6h5z" fill="#fff" stroke="#222" stroke-width="1"/></svg>
<!-- MAIN SLIDE -->
<div class="a" style="left:567px;top:331px;width:886px;height:499px;overflow:hidden;background:linear-gradient(105deg,#f48a2e 0%,#ee7622 28%,#de5e16 52%,#c8460c 76%,#ac2c06 100%);box-shadow:0 0 3px rgba(255,140,80,0.5)">
 <div class="a" style="left:0;top:45px;width:759px;height:99px;background:#2b272c;box-shadow:0 2px 4px rgba(0,0,0,0.4)"></div>
 <div class="a" style="left:770px;top:45px;width:116px;height:99px;background:#ff9610"></div>
 <div class="a" style="left:0;top:0;width:886px;height:45px;background:linear-gradient(90deg,rgba(255,160,60,0.35),rgba(255,120,40,0.1) 60%,rgba(0,0,0,0))"></div>
 <div class="a" style="left:312px;top:76px;font-size:32px;color:#fff;white-space:nowrap;text-shadow:1px 1px 2px rgba(0,0,0,0.5)">Conclusions</div>
 <div id="body">
<div class="bl" style="top:130.70px">Prison traditions and systems in Europe differ. Problems faced with</div>
<div class="bl" style="top:151.95px">radicalization are also failed with different intensity in different</div>
<div class="bl" style="top:173.20px">countries and therefor a constant cooperation dialog and exchanges</div>
<div class="bl" style="top:194.45px">of practices cross-border are essential for preventing and combating</div>
<div class="bl last" style="top:215.70px">radicalization and extremism in our societies including in prisons.</div>
<div class="bl" style="top:246.00px">The issue of radicalization and VE is reflected in prison staff training</div>
<div class="bl" style="top:267.25px;letter-spacing:0.68px">across Europe. The dynamics of the phenomena call for more efforts</div>
<div class="bl" style="top:288.50px">in the preparation and support of prison professionals who are</div>
<div class="bl" style="top:309.75px">involved in the assessment and rehabilitation of radicalized and</div>
<div class="bl last" style="top:331.00px">VEOs.</div>
<div class="bl" style="top:362.50px">Good practices of co-operation between prisons/training academies</div>
<div class="bl" style="top:383.75px">and research institutes are established in Europe (nationally and</div>
<div class="bl" style="top:405.00px">internationally). The need for more evidence based practices is</div>
<div class="bl last" style="top:426.25px">growing -FTFs, women, returning youths from war zones.</div>
</div>
</div>
<!-- notes -->
<div class="a" style="left:452px;top:848px;font-size:14.5px;color:#555;white-space:nowrap;letter-spacing:0.5px">Click to add notes</div>
<!-- status bar -->
<div class="a" style="left:224px;top:874px;width:1372px;height:24px;background:#f3f2f3;border-top:1px solid #dcdbdc"></div>
<div class="a" style="left:340px;top:880px;font-size:11px;color:#666;white-space:nowrap">English (United States)</div>
<svg class="a" style="left:1118px;top:880px" width="15" height="12" viewBox="0 0 15 12"><path d="M1 5h13M1 8h13M1 11h13M5 3l2.5-2 2.5 2" fill="none" stroke="#777" stroke-width="1"/></svg>
<div class="a" style="left:1134px;top:880px;font-size:11px;color:#666">Notes</div>
<svg class="a" style="left:1179px;top:878px" width="15" height="15" viewBox="0 0 15 15"><path d="M1 1h13v9H6l-3 4v-4H1z" fill="#777"/></svg>
<div class="a" style="left:1196px;top:880px;font-size:11px;color:#666">Comments</div>
<div class="a" style="left:1268px;top:875px;width:29px;height:23px;background:#dcdbdc"></div>
<svg class="a" style="left:1275px;top:879px" width="15" height="14" viewBox="0 0 15 14"><rect x="1" y="1" width="13" height="12" fill="none" stroke="#777" stroke-width="1.1"/><path d="M4 1v12M6 5h6" stroke="#777" stroke-width="1"/></svg>
<svg class="a" style="left:1307px;top:879px" width="15" height="14" viewBox="0 0 15 14"><rect x="1" y="1" width="6" height="5" fill="none" stroke="#777"/><rect x="8" y="1" width="6" height="5" fill="none" stroke="#777"/><rect x="1" y="8" width="6" height="5" fill="none" stroke="#777"/><rect x="8" y="8" width="6" height="5" fill="none" stroke="#777"/></svg>
<svg class="a" style="left:1339px;top:879px" width="15" height="14" viewBox="0 0 15 14"><path d="M1 2h6v11H1zM8 2h6v11H8z" fill="none" stroke="#777"/><path d="M3 5h3M3 8h3M10 5h3M10 8h3" stroke="#999"/></svg>
<svg class="a" style="left:1371px;top:878px" width="15" height="16" viewBox="0 0 15 16"><path d="M1 1.5h13M2 2v7h11V2M7.5 9v5M5 15h5" fill="none" stroke="#777" stroke-width="1.1"/></svg>
<div class="a" style="left:1399px;top:885px;width:8px;height:2px;background:#777"></div>
<div class="a" style="left:1412px;top:886px;width:106px;height:1px;background:#aaa"></div>
<div class="a" style="left:1441px;top:879px;width:4px;height:13px;background:#666"></div>
<svg class="a" style="left:1520px;top:880px" width="12" height="12" viewBox="0 0 12 12"><path d="M6 1v10M1 6h10" stroke="#666" stroke-width="1.6"/></svg>
<div class="a" style="left:1543px;top:880px;font-size:11px;color:#666">65%</div>
<svg class="a" style="left:1577px;top:878px" width="14" height="15" viewBox="0 0 14 15"><rect x="1" y="1" width="12" height="13" fill="none" stroke="#888"/><path d="M4 4l3 3M10 4L7 7M4 11l3-3M10 11L7 8" stroke="#888"/></svg>
<!-- remote taskbar -->
<div class="a" style="left:224px;top:898px;width:140px;height:43px;background:#f2f2f2"></div>
<div class="a" style="left:364px;top:898px;width:280px;height:43px;background:#f3f3f3"></div>
<div class="a" style="left:357px;top:911px;font-size:15px;color:#333;white-space:nowrap;letter-spacing:0.4px">here to search</div>
<div class="a" style="left:644px;top:898px;width:952px;height:43px;background:#1e1e1f"></div>
<div class="a" style="left:1591px;top:898px;width:1px;height:43px;background:#444"></div>
<div class="a" style="left:1072px;top:898px;width:52px;height:43px;background:#3a3a3a"></div>
<svg class="a" style="left:660px;top:911px" width="19" height="19" viewBox="0 0 19 19"><circle cx="9.5" cy="9.5" r="7.5" fill="none" stroke="#fff" stroke-width="2"/></svg>
<svg class="a" style="left:711px;top:910px" width="20" height="20" viewBox="0 0 20 20"><path d="M1 3h12M1 17h12M3 5h8v10H3z M17 2v4M17 8v10" fill="none" stroke="#ddd" stroke-width="1.4"/></svg>
<svg class="a" style="left:763px;top:907px" width="26" height="26" viewBox="0 0 26 26"><path d="M24 12A11 11 0 1 0 16 24Q8 22 8 15Q9 10 14 10q6 0 10 2z" fill="#1b7ed6"/><path d="M24 12Q22 4 13 3q-8 0-10 8q4-4 11-2q5 2 4 7h6z" fill="#47c06a"/></svg>
<svg class="a" style="left:816px;top:908px" width="28" height="24" viewBox="0 0 28 24"><path d="M1 4h9l2 2h15v17H1z" fill="#f2c44a"/><path d="M1 8h26v15H1z" fill="#f8d775"/><path d="M9 23v-6h10v6" fill="#2f8fd8"/></svg>
<svg class="a" style="left:871px;top:908px" width="25" height="25" viewBox="0 0 25 25"><circle cx="12.5" cy="12.5" r="12" fill="#db4437"/><path d="M12.5 12.5L2 6.5A12 12 0 0 1 23 6.5z" fill="#db4437"/><path d="M12.5 12.5H23A12 12 0 0 1 12 24.5z" fill="#f4b400"/><path d="M12.5 12.5L12 24.5A12 12 0 0 1 1.6 7z" fill="#0f9d58"/><circle cx="12.5" cy="12.5" r="5.5" fill="#fff"/><circle cx="12.5" cy="12.5" r="4.2" fill="#4285f4"/></svg>
<svg class="a" style="left:924px;top:906px" width="26" height="27" viewBox="0 0 26 27"><circle cx="13" cy="15" r="11" fill="#ff7139"/><path d="M13 4q9 1 11 9q-2-6-8-7q4 4 1 8q-3 3-7 1" fill="#ffbd2e"/><circle cx="13" cy="15" r="5.5" fill="#7542e5"/></svg>
<svg class="a" style="left:978px;top:908px" width="26" height="24" viewBox="0 0 26 24"><rect x="10" y="4" width="15" height="16" fill="#fff" stroke="#ccc"/><path d="M11 6l6 5 6-5" fill="none" stroke="#1a5fb4" stroke-width="1.5"/><rect x="1" y="2" width="14" height="20" fill="#0f64c4"/><circle cx="8" cy="12" r="4" fill="none" stroke="#fff" stroke-width="2"/></svg>
<svg class="a" style="left:1031px;top:906px" width="26" height="28" viewBox="0 0 26 28"><circle cx="19" cy="7" r="3.5" fill="#7b83eb"/><circle cx="12" cy="5" r="4" fill="#5059c9"/><rect x="10" y="10" width="14" height="12" rx="4" fill="#7b83eb"/><rect x="1" y="8" width="13" height="13" fill="#4b53bc"/><path d="M4 11h7M7.5 11v8" stroke="#fff" stroke-width="2"/><circle cx="20" cy="22" r="4.5" fill="#92c353" stroke="#1e1e1f"/></svg>
<svg class="a" style="left:1085px;top:908px" width="26" height="24" viewBox="0 0 26 24"><rect x="10" y="3" width="15" height="18" fill="#fff"/><path d="M13 7h9M13 11h9M13 15h9" stroke="#c43e1c" stroke-width="1.5"/><rect x="1" y="2" width="15" height="20" fill="#d24726"/><path d="M5 17V7h4a3 3 0 0 1 0 6H5" fill="none" stroke="#fff" stroke-width="2"/></svg>
<div class="a" style="left:862px;top:938px;width:43px;height:2px;background:#6cb4f0"></div>
<div class="a" style="left:916px;top:938px;width:43px;height:2px;background:#6cb4f0"></div>
<div class="a" style="left:1023px;top:938px;width:43px;height:2px;background:#6cb4f0"></div>
<div class="a" style="left:1072px;top:938px;width:52px;height:2px;background:#6cb4f0"></div>
<svg class="a" style="left:1354px;top:914px" width="14" height="8" viewBox="0 0 14 8"><path d="M1 7l6-6 6 6" fill="none" stroke="#ddd" stroke-width="1.4"/></svg>
<svg class="a" style="left:1378px;top:912px" width="19" height="14" viewBox="0 0 19 14"><rect x="3" y="5" width="14" height="7" fill="none" stroke="#ddd" stroke-width="1.3"/><rect x="5" y="7" width="9" height="3" fill="#ddd"/><path d="M17 7v3M2 1l2 3" stroke="#ddd" stroke-width="1.3"/></svg>
<svg class="a" style="left:1405px;top:911px" width="17" height="16" viewBox="0 0 17 16"><path d="M2 15A13 13 0 0 1 15 2M5 15A10 10 0 0 1 15 5M8 15A7 7 0 0 1 15 8M11 15A4 4 0 0 1 15 11" fill="none" stroke="#ccc" stroke-width="1.2"/></svg>
<div class="a" style="left:1433px;top:913px;font-size:13px;color:#eee">ENG</div>
<div class="a" style="left:1475px;top:903px;font-size:13px;color:#eee;white-space:nowrap">12:30 PM</div>
<div class="a" style="left:1471px;top:923px;font-size:13px;color:#eee;white-space:nowrap">5/17/2021</div>
<svg class="a" style="left:1551px;top:910px" width="28" height="28" viewBox="0 0 28 28"><path d="M1 1h15v11H7l-3 3v-3H1z" fill="#eee"/><path d="M4 4h9M4 7h9" stroke="#1e1e1f" stroke-width="1"/><circle cx="19" cy="18" r="7" fill="#1e1e1f" stroke="#888" stroke-width="1"/><text x="19" y="22" font-size="11" fill="#fff" text-anchor="middle" font-family="Liberation Sans">1</text></svg>
<!-- KUDO OVERLAYS -->
<div class="a" style="left:0;top:179px;width:271px;height:39px;border-radius:0 6px 6px 0;background:rgba(0,0,0,0.0)"></div>
<div class="a" style="left:25px;top:191px;width:12px;height:12px;border-radius:50%;background:#f73b5c"></div>
<div class="a" style="left:47px;top:190px;font-size:14px;color:#777;white-space:nowrap">Live Video</div>
<div class="a" style="left:133px;top:192px;width:2px;height:13px;background:#ddd"></div>
<div class="a" style="left:153px;top:191px;width:12px;height:12px;border-radius:50%;background:#f73b5c"></div>
<div class="a" style="left:175px;top:190px;font-size:14px;color:#fff;white-space:nowrap">Presentation</div>
<svg class="a" style="left:1786px;top:184px" width="22" height="22" viewBox="0 0 22 22"><path d="M1.5 7V1.5H7M15 1.5h5.5V7M20.5 15v5.5H15M7 20.5H1.5V15" fill="none" stroke="#fff" stroke-width="2.2"/></svg>
<!-- sidebar -->
<div class="sbc" style="top:199px"></div><div class="sbl" style="top:264px">Share Screen</div>
<div class="sbc" style="top:306px"></div><div class="sbl" style="top:371px">Messaging</div>
<div class="sbc" style="top:413px"></div><div class="sbl" style="top:478px">Polls</div>
<div class="sbc" style="top:520px"></div><div class="sbl" style="top:585px">Documents</div>
<div class="sbc" style="top:627px"></div><div class="sbl" style="top:692px">Request List</div>
<svg class="a" style="left:1857px;top:218px" width="27" height="23" viewBox="0 0 27 23"><path d="M1.5 8V3.5a1.5 1.5 0 0 1 1.5-1.5h21a1.5 1.5 0 0 1 1.5 1.5v16a1.5 1.5 0 0 1-1.5 1.5H11" fill="none" stroke="#fff" stroke-width="1.8"/><path d="M1.8 19.5Q3 12.5 11 11.5V8.2L16.5 12.9 11 17.6V14.6Q5 14.6 1.8 19.5z" fill="none" stroke="#fff" stroke-width="1.5" stroke-linejoin="round"/></svg>
<svg class="a" style="left:1857px;top:324px" width="25" height="26" viewBox="0 0 25 26"><path d="M2 2h21v17H9l-5 5v-5H2z" fill="none" stroke="#fff" stroke-width="1.8" stroke-linejoin="round"/><path d="M6 7h13M6 11h13M6 15h8" stroke="#fff" stroke-width="1.6"/></svg>
<svg class="a" style="left:1858px;top:430px" width="24" height="28" viewBox="0 0 24 28"><rect x="1.5" y="1.5" width="21" height="25" rx="1.5" fill="none" stroke="#fff" stroke-width="1.8"/><path d="M5 7l1.5 1.5L9 6M5 13.5l1.5 1.5L9 12.5" fill="none" stroke="#fff" stroke-width="1.5"/><circle cx="7" cy="21" r="1.8" fill="none" stroke="#fff" stroke-width="1.3"/><path d="M12 8h7M12 14h7M12 21h7" stroke="#fff" stroke-width="1.6"/></svg>
<svg class="a" style="left:1859px;top:537px" width="22" height="28" viewBox="0 0 22 28"><path d="M1.5 1.5h13l6 6v19h-19z M14.5 1.5v6h6" fill="none" stroke="#fff" stroke-width="1.8" stroke-linejoin="round"/><path d="M5.5 12h11M5.5 16h11M5.5 20h11" stroke="#fff" stroke-width="1.6"/></svg>
<svg class="a" style="left:1852px;top:644px" width="34" height="26" viewBox="0 0 34 26"><circle cx="11" cy="8" r="6" fill="none" stroke="#fff" stroke-width="1.8"/><path d="M1.5 25q0-9 9.5-9t9.5 9z" fill="none" stroke="#fff" stroke-width="1.8" stroke-linejoin="round"/><path d="M23 6h9M23 11h9M23 16h9" stroke="#fff" stroke-width="1.6"/></svg>
<!-- video tile -->
<div class="a" style="left:248px;top:841px;width:116px;height:100px;background:#000"></div>
<div class="a" style="left:115px;top:841px;width:133px;height:100px;overflow:hidden;filter:blur(0.5px);background:linear-gradient(90deg,#c2c3c6,#cdced0 50%,#c9cacc)">
 <div class="a" style="left:38px;top:14px;width:95px;height:56px;background:#b4b6ba"></div>
 <div class="a" style="left:46px;top:18px;width:11px;height:14px;background:#2c2e33"></div>
 <div class="a" style="left:57px;top:18px;width:10px;height:14px;background:#3d3f45"></div>
 <div class="a" style="left:67px;top:17px;width:12px;height:14px;background:#c48eac"></div>
 <div class="a" style="left:80px;top:16px;width:25px;height:16px;background:#d6dde6"></div>
 <div class="a" style="left:84px;top:19px;width:18px;height:8px;background:#6fa0d8;opacity:0.8"></div>
 <div class="a" style="left:105px;top:14px;width:20px;height:16px;background:#3a4048"></div>
 <div class="a" style="left:38px;top:31px;width:20px;height:15px;background:#7d848c"></div>
 <div class="a" style="left:80px;top:34px;width:26px;height:15px;background:#2e3442"></div>
 <div class="a" style="left:108px;top:28px;width:25px;height:18px;background:#353a44"></div>
 <div class="a" style="left:110px;top:45px;width:23px;height:16px;background:#6a5048"></div>
 <div class="a" style="left:82px;top:49px;width:44px;height:14px;background:#7a8582"></div>
 <div class="a" style="left:90px;top:64px;width:36px;height:6px;background:#2a2a30"></div>
 <div class="a" style="left:36px;top:61px;width:56px;height:22px;border-radius:8px;background:#d9d9da"></div>
 <div class="a" style="left:22px;top:73px;width:91px;height:30px;border-radius:24px 24px 0 0;background:#232427"></div>
 <div class="a" style="left:53px;top:83px;width:30px;height:17px;background:#d8d8d8"></div>
 <div class="a" style="left:55px;top:85px;width:26px;height:15px;background:repeating-linear-gradient(90deg,#1a1a1a 0 3px,#e8e8e8 3px 5px)"></div>
 <div class="a" style="left:49px;top:38px;width:35px;height:47px;border-radius:45%;background:#c48c78"></div>
 <div class="a" style="left:46px;top:33px;width:40px;height:20px;border-radius:50% 50% 20% 20%;background:#a8664a"></div>
 <div class="a" style="left:46px;top:40px;width:6px;height:25px;border-radius:3px;background:#a8664a"></div>
 <div class="a" style="left:80px;top:40px;width:6px;height:22px;border-radius:3px;background:#a8664a"></div>
</div>
<div class="a" style="left:0;top:914px;width:108px;height:27px;background:#111;border-radius:0 4px 0 0"></div>
<div class="a" style="left:11px;top:920px;font-size:11px;font-weight:bold;color:#fff;white-space:nowrap;letter-spacing:-0.2px">Nadya Radkovska</div>
<!-- sharing bar -->
<div class="a" style="left:700px;top:844px;width:419px;height:44px;background:#fff;box-shadow:0 1px 4px rgba(0,0,0,0.3)"></div>
<div class="a" style="left:712px;top:860px;width:2px;height:12px;background:#ccc;box-shadow:4px 0 0 #ccc"></div>
<div class="a" style="left:729px;top:858px;font-size:12.6px;color:#333;white-space:nowrap">vmeeting.coe.int is sharing your screen.</div>
<div class="a" style="left:963px;top:849px;width:108px;height:33px;background:#1a73e8;border-radius:3px"></div>
<div class="a" style="left:980px;top:858px;font-size:12.6px;font-weight:bold;color:#fff;white-space:nowrap;letter-spacing:-0.3px">Stop sharing</div>
<div class="a" style="left:1082px;top:858px;font-size:12.6px;color:#1a73e8;white-space:nowrap">Hide</div>
<!-- bottom bar -->
<div class="a" style="left:23px;top:966px;width:250px;height:36px;background:#fff;border-radius:4px"></div>
<div class="a" style="left:48px;top:976px;font-size:14px;color:#444;white-space:nowrap">FLOOR</div>
<svg class="a" style="left:255px;top:982px" width="8" height="6" viewBox="0 0 8 6"><path d="M1 1l3 3 3-3" fill="none" stroke="#777" stroke-width="1.5"/></svg>
<div class="a" style="left:23px;top:1008px;font-size:10px;font-weight:bold;color:#8e8e8e;letter-spacing:-0.35px;white-space:nowrap">Language Selector</div>
<div class="bbc" style="left:746px"></div><div class="bbl" style="left:716px">Volume</div>
<div class="bbc" style="left:836px"></div><div class="bbl" style="left:806px">Audio Meter</div>
<div class="bbc" style="left:926px"></div><div class="bbl" style="left:896px">Unmute</div>
<div class="bbc" style="left:1016px"></div><div class="bbl" style="left:986px">Turn On</div>
<div class="bbc" style="left:1106px"></div><div class="bbl" style="left:1076px">Settings</div>
<svg class="a" style="left:759px;top:966px" width="36" height="30" viewBox="0 0 36 30"><path d="M2 10h6l8-7v24l-8-7H2z" fill="none" stroke="#eee" stroke-width="2" stroke-linejoin="round"/><path d="M22 10q2.5 5 0 10M27 6q5 9 0 18" fill="none" stroke="#eee" stroke-width="2"/></svg>
<svg class="a" style="left:850px;top:965px" width="34" height="32" viewBox="0 0 34 32"><rect x="1.5" y="22" width="4" height="8" fill="#eee"/><rect x="10.5" y="14" width="4" height="16" fill="#eee"/><rect x="19.5" y="7" width="4" height="23" fill="#eee"/><rect x="28.5" y="0" width="4" height="30" fill="#eee"/></svg>
<svg class="a" style="left:945px;top:964px" width="22" height="34" viewBox="0 0 22 34"><rect x="6" y="1" width="10" height="21" rx="5" fill="none" stroke="#ddd" stroke-width="2"/><path d="M1.5 16a9.5 9.5 0 0 0 19 0M11 26v6M5 32.5h12" fill="none" stroke="#ddd" stroke-width="2"/></svg>
<svg class="a" style="left:1030px;top:971px" width="33" height="21" viewBox="0 0 33 21"><rect x="1" y="1" width="21" height="19" rx="2" fill="none" stroke="#ddd" stroke-width="2"/><path d="M22 10.5L31.5 3v15z" fill="none" stroke="#ddd" stroke-width="2" stroke-linejoin="round"/></svg>
<svg class="a" style="left:1120px;top:964px" width="34" height="34" viewBox="0 0 34 34"><path d="M27.6 14.1 L31.8 14.5 L31.8 19.5 L27.6 19.9 L26.6 22.4 L29.2 25.7 L25.7 29.2 L22.4 26.6 L19.9 27.6 L19.5 31.8 L14.5 31.8 L14.1 27.6 L11.6 26.6 L8.3 29.2 L4.8 25.7 L7.4 22.4 L6.4 19.9 L2.2 19.5 L2.2 14.5 L6.4 14.1 L7.4 11.6 L4.8 8.3 L8.3 4.8 L11.6 7.4 L14.1 6.4 L14.5 2.2 L19.5 2.2 L19.9 6.4 L22.4 7.4 L25.7 4.8 L29.2 8.3 L26.6 11.6z" fill="none" stroke="#ddd" stroke-width="1.8" stroke-linejoin="round"/><circle cx="17" cy="17" r="4.5" fill="none" stroke="#ddd" stroke-width="1.8"/></svg>
<div class="a" style="left:1640px;top:955px;width:160px;height:40px;background:#0a84ff;border-radius:4px"></div>
<div class="a" style="left:1664px;top:967px;font-size:14px;color:#fff;white-space:nowrap">Request to Speak</div>
<div class="a" style="left:1840px;top:971px;width:60px;height:40px;background:#f8365c;border-radius:4px;box-shadow:0 0 6px 2px rgba(248,54,92,0.45)"></div>
<div class="a" style="left:1850px;top:983px;font-size:14px;color:#fff;white-space:nowrap">Leave</div>
<!-- windows taskbar -->
<div class="a" style="left:343px;top:1040px;width:48px;height:40px;background:#2a2d34"></div>
<svg class="a" style="left:16px;top:1052px" width="16" height="16" viewBox="0 0 16 16"><path d="M0 2.3l6.5-.9v6.2H0zM7.3 1.3L16 0v7.6H7.3zM0 8.4h6.5v6.2L0 13.7zM7.3 8.4H16V16l-8.7-1.2z" fill="#fff"/></svg>
<svg class="a" style="left:63px;top:1051px" width="18" height="18" viewBox="0 0 18 18"><circle cx="11" cy="7" r="5.5" fill="none" stroke="#fff" stroke-width="1.5"/><path d="M7 11L1 17" stroke="#fff" stroke-width="1.6"/></svg>
<svg class="a" style="left:111px;top:1051px" width="18" height="18" viewBox="0 0 18 18"><path d="M1 2h11M1 16h11M2.5 4.5h8v9h-8zM15.5 1v4M15.5 7v10" fill="none" stroke="#fff" stroke-width="1.4"/></svg>
<svg class="a" style="left:159px;top:1050px" width="24" height="20" viewBox="0 0 24 20"><path d="M1 2h8l2 2h12v15H1z" fill="#e8b83a"/><path d="M1 6h22v13H1z" fill="#fbd56e"/><path d="M7 19v-6h10v6" fill="#2e9ae0"/></svg>
<svg class="a" style="left:208px;top:1049px" width="24" height="22" viewBox="0 0 24 22"><ellipse cx="12" cy="11" rx="8.5" ry="8.5" fill="none" stroke="#1f8ae0" stroke-width="3.5"/><path d="M4 11h16" stroke="#1f8ae0" stroke-width="3"/><path d="M2 20Q-2 14 10 6Q22 -2 23 2Q24 6 16 12" fill="none" stroke="#f6b12a" stroke-width="1.6"/><rect x="13" y="12" width="9" height="4" fill="#0a0d16"/></svg>
<svg class="a" style="left:256px;top:1048px" width="24" height="24" viewBox="0 0 24 24"><rect x="1" y="1" width="22" height="22" rx="2" fill="#f7a823"/><rect x="3" y="3" width="18" height="18" fill="#fbe3a5"/><circle cx="9" cy="11" r="5" fill="none" stroke="#e86a1a" stroke-width="2.5"/><path d="M14 8h6v8h-6z" fill="#fff" stroke="#e86a1a"/></svg>
<svg class="a" style="left:305px;top:1048px" width="26" height="25" viewBox="0 0 26 25"><path d="M24 12A11 11 0 1 0 16 23.5Q8 21.5 8 14.5Q9 9.5 14 9.5q6 0 10 2.5z" fill="#1b7ed6"/><path d="M24 12Q22 3.5 13 2.5q-8 0-10 8q4-4 11-2q5 2 4 7h6z" fill="#47c06a"/></svg>
<svg class="a" style="left:355px;top:1048px" width="24" height="24" viewBox="0 0 24 24"><circle cx="12" cy="12" r="11.5" fill="#db4437"/><path d="M12 12H23A11.5 11.5 0 0 1 11 23.5z" fill="#f4b400"/><path d="M12 12L11 23.5A11.5 11.5 0 0 1 1.5 6.5z" fill="#0f9d58"/><circle cx="12" cy="12" r="5.3" fill="#fff"/><circle cx="12" cy="12" r="4" fill="#4285f4"/></svg>
<svg class="a" style="left:403px;top:1048px" width="24" height="24" viewBox="0 0 24 24"><rect x="8" y="2" width="15" height="20" fill="#fff" stroke="#b8c8e0"/><path d="M11 6h9M11 10h9M11 14h9M11 18h9" stroke="#2b579a" stroke-width="1.2"/><rect x="1" y="4" width="15" height="16" fill="#2b579a"/><path d="M3 7l2 10 2.5-7 2.5 7 2-10" fill="none" stroke="#fff" stroke-width="1.6"/></svg>
<div class="a" style="left:249px;top:1078px;width:40px;height:2px;background:#76b9ed"></div>
<div class="a" style="left:343px;top:1078px;width:48px;height:2px;background:#76b9ed"></div>
<div class="a" style="left:396px;top:1078px;width:40px;height:2px;background:#76b9ed"></div>
<svg class="a" style="left:1745px;top:1054px" width="14" height="9" viewBox="0 0 14 9"><path d="M1 8l6-6 6 6" fill="none" stroke="#fff" stroke-width="1.3"/></svg>
<svg class="a" style="left:1767px;top:1050px" width="20" height="18" viewBox="0 0 20 18"><rect x="4" y="2" width="15" height="11" fill="none" stroke="#fff" stroke-width="1.2"/><path d="M11.5 13v3M7 17h9" stroke="#fff" stroke-width="1.2"/><rect x="1" y="1" width="5" height="5" fill="#0a0d16" stroke="#fff" stroke-width="1"/></svg>
<svg class="a" style="left:1791px;top:1051px" width="19" height="17" viewBox="0 0 19 17"><path d="M1 6h3l5-4.5v14L4 11H1z" fill="none" stroke="#fff" stroke-width="1.2"/><path d="M12 6q1.5 2.5 0 5M14.5 4q3 4.5 0 9M17 2q4 6.5 0 13" fill="none" stroke="#fff" stroke-width="1.2"/></svg>
<div class="a" style="left:1821px;top:1052px;font-size:12px;color:#fff">CES</div>
<div class="a" style="left:1867px;top:1043px;font-size:12px;color:#fff">11:32</div>
<div class="a" style="left:1855px;top:1061px;font-size:12px;color:#fff;letter-spacing:-0.6px">17.05.2021</div>
<div class="a" style="left:1915px;top:1040px;width:1px;height:40px;background:#555"></div>
</body></html>
